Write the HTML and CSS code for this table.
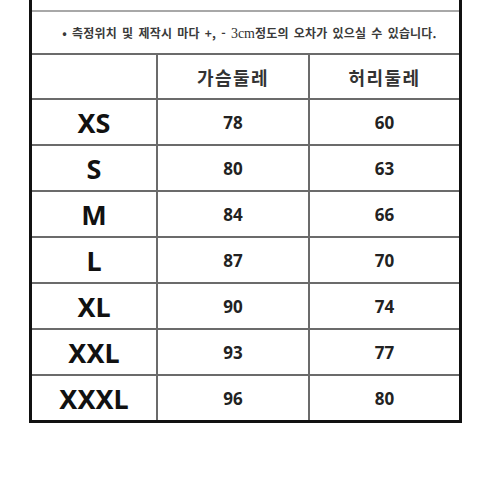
FILE: index.html
```html
<!DOCTYPE html>
<html lang="ko">
<head>
<meta charset="utf-8">
<link rel="stylesheet" href="styles.css">
</head>
<body>
<div class="chart">
  <div class="cut-row"></div>
  <div class="grid">
    <div class="note"><span>• 측정위치 및 제작시 마다 +, - <span class="latin">3cm</span>정도의 오차가 있으실 수 있습니다.</span></div>
    <div class="cell"></div>
    <div class="cell head">가슴둘레</div>
    <div class="cell head">허리둘레</div>

    <div class="cell size">XS</div><div class="cell num">78</div><div class="cell num">60</div>
    <div class="cell size">S</div><div class="cell num">80</div><div class="cell num">63</div>
    <div class="cell size">M</div><div class="cell num">84</div><div class="cell num">66</div>
    <div class="cell size">L</div><div class="cell num">87</div><div class="cell num">70</div>
    <div class="cell size">XL</div><div class="cell num">90</div><div class="cell num">74</div>
    <div class="cell size">XXL</div><div class="cell num">93</div><div class="cell num">77</div>
    <div class="cell size">XXXL</div><div class="cell num">96</div><div class="cell num">80</div>
  </div>
</div>
</body>
</html>
```
FILE: styles.css
```css
html, body {
  margin: 0;
  padding: 0;
  background: #ffffff;
}
body {
  width: 490px;
  height: 490px;
  overflow: hidden;
}
.chart {
  margin: -33px 0 0 29px;
  width: 427px;
  border: 3px solid #111;
  background: #fff;
}
.cut-row {
  height: 40px;
  border-bottom: 2px solid #a8a8a8;
  background: #fff;
}
.grid {
  display: grid;
  grid-template-columns: 124px 150px 149px;
  grid-template-rows: 41px 43px repeat(7, 44px);
  gap: 2px;
  background: #6b6b6b;
}
.cell, .note {
  background: #fff;
  display: flex;
  align-items: center;
  justify-content: center;
}
.note {
  grid-column: 1 / 4;
  font-family: "Noto Sans CJK KR", sans-serif;
  font-weight: 700;
  font-size: 12px;
  color: #3a3a3a;
  letter-spacing: 0.2px;
  word-spacing: 1.5px;
  padding: 1px 0 0 8px;
  white-space: pre;
}
.note .latin {
  font-family: "Liberation Serif", serif;
  font-weight: 400;
  font-size: 14px;
  color: #333;
  letter-spacing: 0;
}
.head {
  font-family: "Noto Sans CJK KR", sans-serif;
  font-weight: 700;
  font-size: 18px;
  letter-spacing: 1.5px;
  color: #333;
  padding-top: 1px;
}
.size {
  font-family: "Noto Sans", sans-serif;
  font-weight: 700;
  font-size: 27px;
  color: #111;
}
.num {
  font-family: "Noto Sans", sans-serif;
  font-weight: 700;
  font-size: 17px;
  color: #222;
}
```
